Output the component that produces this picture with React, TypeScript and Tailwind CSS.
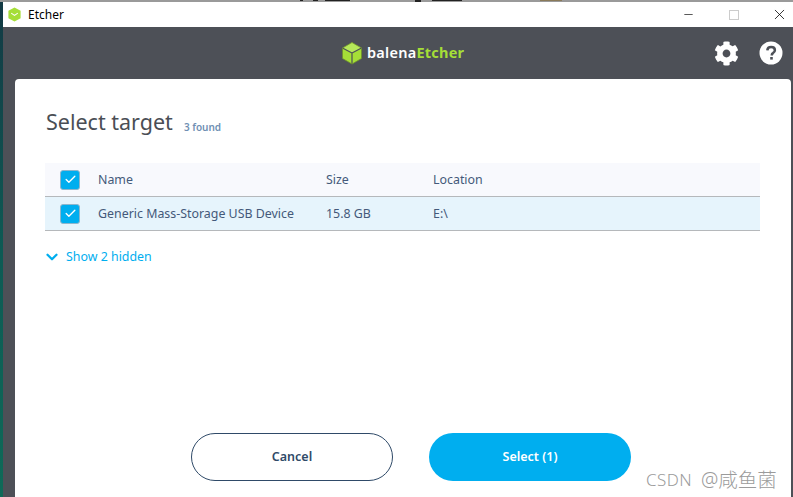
import React from "react";
import { Minus, X, Check, ChevronDown } from "lucide-react";
import { FaCog } from "react-icons/fa";

const font = { fontFamily: '"Noto Sans", "Noto Sans CJK SC", sans-serif' };

function EtcherCube({ size }: { size: number }) {
  return (
    <svg width={size} height={size} viewBox="0 0 24 24">
      <path d="M12 1.500 21.500 7v10.500L12 23l-9.500-5.500V7z" fill="#a5de37" />
      <path d="M12 1.500 21.500 7 12 12 2.500 7z" fill="#b6e85a" />
      <path d="M12 12v11M12 12 2.500 7M12 12l9.500-5" stroke="#4d5057" strokeWidth="1.200" fill="none" />
      <path d="M12 1.500 21.500 7v10.500L12 23l-9.500-5.500V7z" stroke="#6d8f2c" strokeWidth="0.800" fill="none" />
    </svg>
  );
}

function TitleIcon() {
  return (
    <svg width="15" height="15" viewBox="0 0 16 16">
      <path d="M8 .5 14.500 4v8L8 15.500 1.500 12V4z" fill="#a5de37" />
      <path d="M4.500 6.500 8 9l3.500-2.500" stroke="#fff" strokeWidth="1.100" fill="none" />
    </svg>
  );
}

function HelpIcon() {
  return (
    <svg width="24" height="24" viewBox="0 0 24 24">
      <circle cx="12" cy="12" r="11.500" fill="#fff" />
      <path
        d="M8.300 9.300C8.500 7.100 10 6 12.100 6c2.200 0 3.800 1.300 3.800 3.200 0 1.500-.9 2.200-1.900 2.900-.9.600-1.200 1-1.200 2v.4"
        stroke="#4d5057"
        strokeWidth="2.500"
        fill="none"
      />
      <rect x="11.200" y="16" width="2.600" height="2.600" fill="#4d5057" />
    </svg>
  );
}

function CheckBox() {
  return (
    <span className="flex h-5 w-5 items-center justify-center rounded-[3px] border border-[#8fb6cc] bg-[#00aeef]">
      <Check size={13} strokeWidth={2.500} className="text-white" />
    </span>
  );
}

function BackgroundScraps() {
  // bits of whatever was behind the window, cut off by the screenshot
  return (
    <svg width="793" height="2" className="block">
      <rect width="793" height="2" fill="#9a9a9a" />
      <path d="M300 0h3v1h-3zM313 0h5v1h-5zM325 0h25v1h-25zM415 0h6v2h-6zM432 0h30v1h-30z" fill="#222" />
      <path d="M540 0h22v1h-22z" fill="#8a7a5a" />
    </svg>
  );
}

export default function App() {
  return (
    <div style={font} className="relative flex h-[497px] w-[793px] flex-col overflow-hidden bg-white">
      <BackgroundScraps />
      <div className="flex min-h-0 flex-1">
        <div className="w-[3px] bg-gradient-to-b from-[#123a44] via-[#0d5a54] to-[#0f6a58]" />
        <div className="flex min-w-0 flex-1 flex-col">
          <div className="flex h-[25px] items-center bg-white pl-[4px]">
            <TitleIcon />
            <span className="ml-[6px] text-[12px] text-black">Etcher</span>
            <div className="ml-auto flex items-center pr-[5px]">
              <Minus size={13} strokeWidth={1.200} className="mr-[34px] text-black" />
              <span className="mr-[32px] h-[10px] w-[10px] border border-[#cccccc]" />
              <X size={17} strokeWidth={1.100} className="text-black" />
            </div>
          </div>
          <div className="flex min-h-0 flex-1 flex-col bg-[#4d5057]">
            <div className="relative flex h-[52px] items-center">
              <div className="ml-[337px] flex items-center">
                <EtcherCube size={24} />
                <span className="ml-[3px] text-[14.500px] font-semibold tracking-[0.25px] text-white">balena</span>
                <span className="text-[14.500px] font-bold tracking-[0.25px] text-[#a5de37]">Etcher</span>
              </div>
              <div className="ml-auto flex items-center gap-[20px] pr-[10px]">
                <FaCog size={25} className="text-white" />
                <HelpIcon />
              </div>
            </div>
            <div className="ml-[12px] mr-[2px] flex min-h-0 flex-1 flex-col rounded-t-[4px] bg-white pl-[30px] pr-[31px]">
              <div className="mt-[26px] flex h-[34px] items-center">
                <h1 className="ml-[1px] text-[21.500px] font-normal text-[#4a4e55]">Select target</h1>
                <span className="ml-[11px] mt-[10px] text-[10px] font-semibold text-[#6f8fb3]">3 found</span>
              </div>
              <div className="mt-[24px] text-[12.400px] text-[#44597a]">
                <div className="flex h-[34px] items-center border-b border-[#b5b8bb] bg-[#f8f9fd]">
                  <span className="ml-[15px] mr-[18px]"><CheckBox /></span>
                  <span className="mt-[2px] w-[228px]">Name</span>
                  <span className="mt-[2px] w-[107px]">Size</span>
                  <span className="mt-[2px]">Location</span>
                </div>
                <div className="flex h-[34px] items-center border-b border-[#b5b8bb] bg-[#e6f4fc]">
                  <span className="ml-[15px] mr-[18px]"><CheckBox /></span>
                  <span className="mt-[2px] w-[228px] whitespace-nowrap">Generic Mass-Storage USB Device</span>
                  <span className="mt-[2px] w-[107px]">15.8 GB</span>
                  <span className="mt-[2px]">E:\</span>
                </div>
              </div>
              <div className="mt-[17px] flex items-center text-[12.400px] text-[#00aeef]">
                <ChevronDown size={18} strokeWidth={3} className="-ml-[2px]" />
                <span className="ml-[5px]">Show 2 hidden</span>
              </div>
              <div className="mt-auto mb-[16px] flex justify-center gap-[36px] pl-[17px]">
                <button className="h-[48px] w-[202px] rounded-full border border-[#2f4a68] bg-white text-[12.500px] font-semibold text-[#2f4a68]">
                  Cancel
                </button>
                <button className="h-[48px] w-[202px] rounded-full bg-[#00aeef] text-[12.500px] font-semibold text-white">
                  Select (1)
                </button>
              </div>
            </div>
          </div>
        </div>
      </div>
      <span className="absolute left-[646px] top-[465px] flex items-center whitespace-nowrap text-[#9b9b9b]">
        <span className="text-[17px] font-light tracking-[0.4px]">CSDN</span>
        <span className="ml-[9px] text-[19.500px] font-light">@咸鱼菌</span>
      </span>
    </div>
  );
}
